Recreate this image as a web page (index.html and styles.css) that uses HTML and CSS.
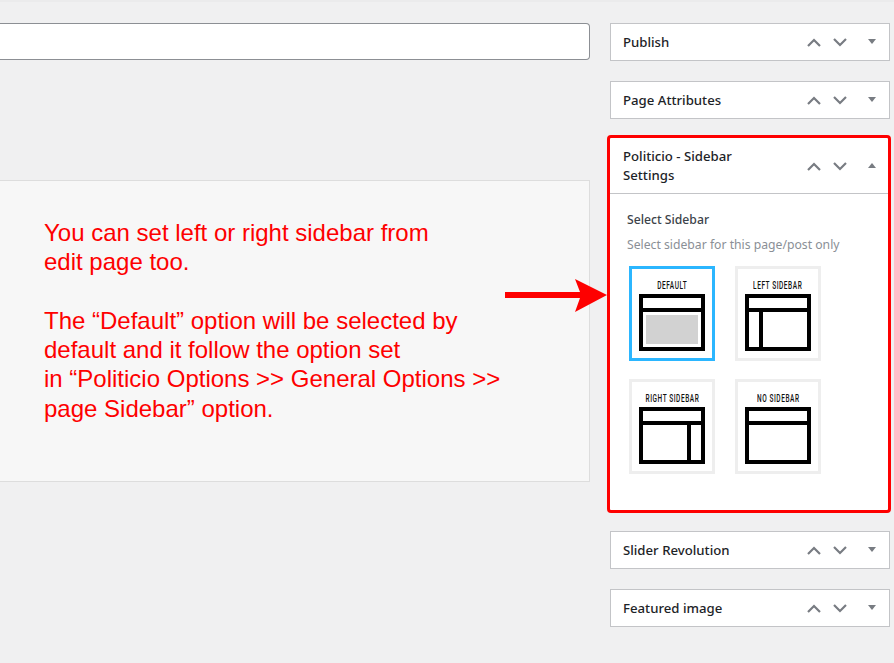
FILE: index.html
```html
<!DOCTYPE html>
<html lang="en">
<head>
<meta charset="utf-8">
<title>Politicio - Sidebar Settings</title>
<link rel="stylesheet" href="styles.css">
</head>
<body>
<svg width="0" height="0" class="defs">
  <symbol id="up" viewBox="0 0 14 9"><path d="M1 8 L7 2 L13 8" fill="none" stroke="#787c82" stroke-width="2.2"/></symbol>
  <symbol id="down" viewBox="0 0 14 9"><path d="M1 1 L7 7 L13 1" fill="none" stroke="#787c82" stroke-width="2.2"/></symbol>
  <symbol id="caret-down" viewBox="0 0 8 5"><path d="M0 0 H8 L4 5 Z" fill="#787c82"/></symbol>
  <symbol id="caret-up" viewBox="0 0 8 5"><path d="M0 5 H8 L4 0 Z" fill="#787c82"/></symbol>
</svg>
<div class="topline"></div>
<div class="page">
  <main class="main">
    <div class="title-input"></div>
    <section class="note">
      <p>You can set left or right sidebar from<br>edit page too.</p>
      <p>The “Default” option will be selected by<br>default and it follow the option set<br>in “Politicio Options &gt;&gt; General Options &gt;&gt;<br>page Sidebar” option.</p>
    </section>
  </main>
  <aside class="side">
    <div class="panel">
      <h2>Publish</h2>
      <div class="ctrls"><svg class="chev"><use href="#up"/></svg><svg class="chev"><use href="#down"/></svg><svg class="caret"><use href="#caret-down"/></svg></div>
    </div>
    <div class="panel">
      <h2>Page Attributes</h2>
      <div class="ctrls"><svg class="chev"><use href="#up"/></svg><svg class="chev"><use href="#down"/></svg><svg class="caret"><use href="#caret-down"/></svg></div>
    </div>
    <div class="panel panel-open">
      <div class="panel-head">
        <h2>Politicio - Sidebar<br>Settings</h2>
        <div class="ctrls"><svg class="chev"><use href="#up"/></svg><svg class="chev"><use href="#down"/></svg><svg class="caret"><use href="#caret-up"/></svg></div>
      </div>
      <div class="panel-body">
        <div class="field-label">Select Sidebar</div>
        <div class="field-desc">Select sidebar for this page/post only</div>
        <div class="tiles">
          <div class="tile tile-on">
            <span class="tile-label">DEFAULT</span>
            <svg class="layout" viewBox="0 0 66 57"><rect x="7" y="21" width="52" height="29" fill="#d2d2d2"/><rect x="2" y="2" width="62" height="53" fill="none" stroke="#000" stroke-width="4"/><path d="M0 16 H66" stroke="#000" stroke-width="4"/></svg>
          </div>
          <div class="tile">
            <span class="tile-label">LEFT SIDEBAR</span>
            <svg class="layout" viewBox="0 0 66 57"><rect x="2" y="2" width="62" height="53" fill="none" stroke="#000" stroke-width="4"/><path d="M0 16 H66 M16 16 V57" stroke="#000" stroke-width="4" fill="none"/></svg>
          </div>
          <div class="tile">
            <span class="tile-label">RIGHT SIDEBAR</span>
            <svg class="layout" viewBox="0 0 66 57"><rect x="2" y="2" width="62" height="53" fill="none" stroke="#000" stroke-width="4"/><path d="M0 16 H66 M50 16 V57" stroke="#000" stroke-width="4" fill="none"/></svg>
          </div>
          <div class="tile">
            <span class="tile-label">NO SIDEBAR</span>
            <svg class="layout" viewBox="0 0 66 57"><rect x="2" y="2" width="62" height="53" fill="none" stroke="#000" stroke-width="4"/><path d="M0 16 H66" stroke="#000" stroke-width="4"/></svg>
          </div>
        </div>
      </div>
    </div>
    <div class="panel panel-after">
      <h2>Slider Revolution</h2>
      <div class="ctrls"><svg class="chev"><use href="#up"/></svg><svg class="chev"><use href="#down"/></svg><svg class="caret"><use href="#caret-down"/></svg></div>
    </div>
    <div class="panel">
      <h2>Featured image</h2>
      <div class="ctrls"><svg class="chev"><use href="#up"/></svg><svg class="chev"><use href="#down"/></svg><svg class="caret"><use href="#caret-down"/></svg></div>
    </div>
  </aside>
</div>
<svg class="arrow" viewBox="0 0 103 34"><path d="M0 13 H75 L70 0 L102 16 L70 33 L75 19 H0 Z" fill="#fe0000"/></svg>
</body>
</html>
```
FILE: styles.css
```css
* { box-sizing: border-box; }
html, body { margin: 0; padding: 0; height: 100%; overflow: hidden; }
body { background: #f0f0f1; font-family: "Noto Sans", "Open Sans", sans-serif; color: #1d2327; position: relative; }
.defs { position: absolute; }
.topline { height: 2px; background: #ebebec; }
.page { display: flex; gap: 20px; padding-top: 21px; }
.main { width: 590px; flex: none; }
.title-input { height: 37px; background: #fff; border: 1px solid #8c8f94; border-left: none; border-radius: 0 4px 4px 0; }
.note { margin-top: 120px; height: 302px; background: #f7f7f7; border: 1px solid #dddddd; border-left: none; padding: 37px 0 0 44px; color: #fe0000; font-family: "Liberation Sans", Arial, sans-serif; font-size: 24px; line-height: 29.3px; }
.note p { margin: 0 0 29.3px; }
.side { width: 280px; flex: none; display: flex; flex-direction: column; gap: 20px; }
.panel { background: #fff; border: 1px solid #c3c4c7; height: 38px; padding-left: 12px; display: flex; align-items: center; justify-content: space-between; }
.panel h2 { margin: 0; font-size: 13.2px; font-weight: 500; line-height: 19px; }
.ctrls { display: flex; align-items: center; width: 70px; flex: none; margin-right: 12px; }
.chev { width: 14px; height: 9px; margin-right: 12px; }
.caret { width: 8px; height: 5px; margin-left: 9px; margin-top: -1px; }
.panel-open { display: block; height: 378px; width: 284px; margin: -4px -2px 0 -3px; border: 3px solid #fe0000; border-radius: 4px; padding: 0; }
.panel-head { display: flex; align-items: center; justify-content: space-between; height: 56px; padding: 1px 0 0 13px; border-bottom: 1px solid #c3c4c7; }
.panel-open .ctrls { margin-right: 11px; }
.panel-after { margin-top: -2px; }
.panel-body { padding: 17px 0 0 17px; }
.field-label { font-size: 12.2px; font-weight: 500; line-height: 18px; color: #3c434a; }
.field-desc { font-size: 12.2px; line-height: 18px; margin-top: 7px; color: #8a8f96; }
.tiles { display: grid; grid-template-columns: 86px 86px; column-gap: 20px; row-gap: 18px; margin-top: 12px; margin-left: 2px; }
.tile { width: 86px; height: 95px; border: 3px solid #eeeeee; display: flex; flex-direction: column; align-items: center; background: #fff; }
.tile-on { border-color: #2bb6ff; }
.tile-label { font-family: "Roboto", "Liberation Sans", sans-serif; font-weight: 500; font-size: 10.5px; line-height: 11px; letter-spacing: 0.9px; color: #111; margin-top: 11px; white-space: nowrap; transform: scaleX(0.62); }
.layout { width: 66px; height: 57px; margin-top: 3px; display: block; flex: none; }
.arrow { position: absolute; left: 505px; top: 279px; width: 103px; height: 34px; }
```
